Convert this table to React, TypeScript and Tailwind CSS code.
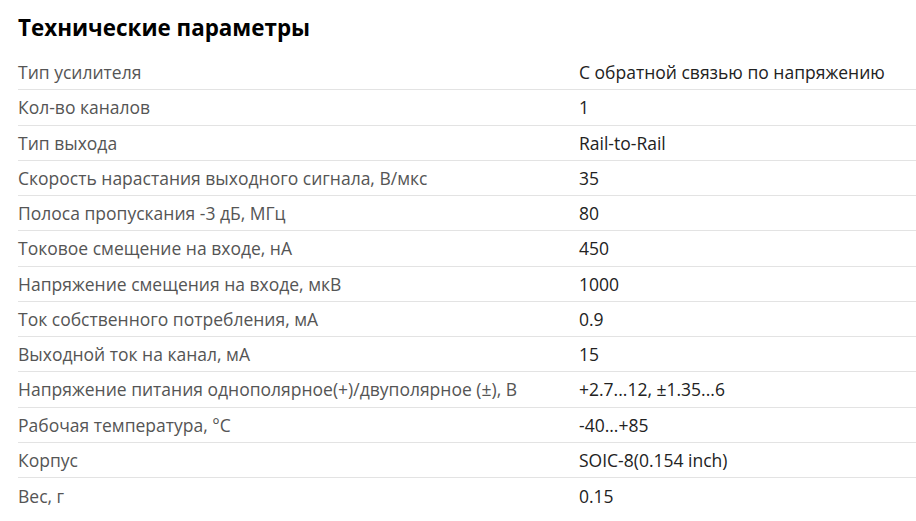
import React from "react";

const rows: [string, string][] = [
  ["Тип усилителя", "С обратной связью по напряжению"],
  ["Кол-во каналов", "1"],
  ["Тип выхода", "Rail-to-Rail"],
  ["Скорость нарастания выходного сигнала, В/мкс", "35"],
  ["Полоса пропускания -3 дБ, МГц", "80"],
  ["Токовое смещение на входе, нА", "450"],
  ["Напряжение смещения на входе, мкВ", "1000"],
  ["Ток собственного потребления, мА", "0.9"],
  ["Выходной ток на канал, мА", "15"],
  ["Напряжение питания однополярное(+)/двуполярное (±), В", "+2.7...12, ±1.35...6"],
  ["Рабочая температура, °C", "-40...+85"],
  ["Корпус", "SOIC-8(0.154 inch)"],
  ["Вес, г", "0.15"],
];

export default function App() {
  return (
    <div
      className="bg-white w-[916px] h-[521px] overflow-hidden pl-[18px]"
      style={{ fontFamily: '"Open Sans", "Noto Sans", sans-serif' }}
    >
      <h2 className="text-[22.4px] font-bold text-black leading-[30px] pt-[13px] h-[55px]">
        Технические параметры
      </h2>
      <div className="flex flex-col">
        {rows.map(([k, v], i) => (
          <div
            key={i}
            className={`flex items-center h-[35.25px] text-[17.5px] ${
              i < rows.length - 1 ? "border-b border-[#e3e3e3]" : ""
            }`}
          >
            <div className="w-[561px] shrink-0 text-[#555555]">{k}</div>
            <div className="text-[#222222]">{v}</div>
          </div>
        ))}
      </div>
    </div>
  );
}
